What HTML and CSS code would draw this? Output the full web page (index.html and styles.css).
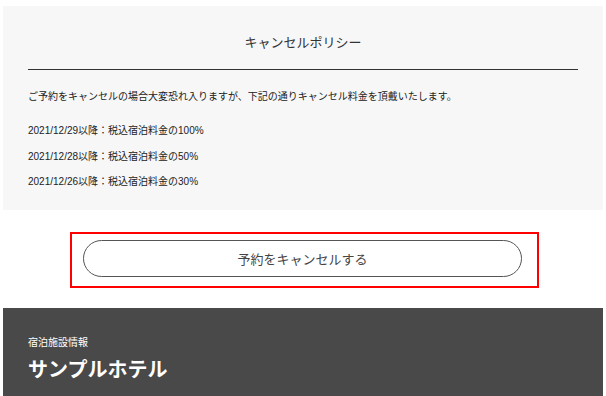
FILE: index.html
```html
<!DOCTYPE html>
<html lang="ja">
<head>
    <meta charset="UTF-8">
    <meta name="viewport" content="width=device-width, initial-scale=1.0">
    <title>キャンセルポリシー</title>
    <link rel="stylesheet" href="styles.css">
</head>
<body>
    <div class="page">
        <section class="policy">
            <h2>キャンセルポリシー</h2>
            <p class="policy-lead">ご予約をキャンセルの場合大変恐れ入りますが、下記の通りキャンセル料金を頂戴いたします。</p>
            <ul class="policy-list">
                <li>2021/12/29以降：税込宿泊料金の100%</li>
                <li>2021/12/28以降：税込宿泊料金の50%</li>
                <li>2021/12/26以降：税込宿泊料金の30%</li>
            </ul>
        </section>

        <div class="cancel-area">
            <button type="button" class="cancel-button">予約をキャンセルする</button>
        </div>

        <footer class="hotel-info">
            <p class="hotel-label">宿泊施設情報</p>
            <p class="hotel-name">サンプルホテル</p>
        </footer>
    </div>
</body>
</html>
```

FILE: styles.css
```css
body {
    margin: 0;
    padding: 0;
    background-color: #fff;
    color: #222;
    font-family: 'Liberation Sans', 'Noto Sans CJK JP', sans-serif;
}

.page {
    padding: 6px 3px 0;
}

.policy {
    background-color: #f7f7f7;
    padding: 0 25px 20px;
}

.policy h2 {
    margin: 0;
    padding: 27px 0 16px;
    font-size: 13px;
    line-height: 20px;
    font-weight: 400;
    text-align: center;
    color: #333;
    border-bottom: 1px solid #333;
}

.policy-lead {
    margin: 19px 0 0;
    font-size: 10px;
    line-height: 16px;
}

.policy-list {
    list-style: none;
    margin: 18px 0 0;
    padding: 0;
    display: flex;
    flex-direction: column;
    gap: 9.5px;
}

.policy-list li {
    font-size: 10px;
    line-height: 16px;
}

.cancel-area {
    width: 469px;
    box-sizing: border-box;
    margin: 22px 0 0 67px;
    padding: 6px 15px 9px 11px;
    border: 2px solid #f00;
}

.cancel-button {
    display: block;
    width: 100%;
    height: 37px;
    background: #fff;
    border: 1px solid #555;
    border-radius: 19px;
    font-family: inherit;
    font-size: 13px;
    color: #444;
    cursor: pointer;
}

.hotel-info {
    margin-top: 20px;
    background-color: #494949;
    color: #fff;
    padding: 28px 25px 30px;
}

.hotel-label {
    margin: 0;
    font-size: 10px;
    line-height: 14px;
}

.hotel-name {
    margin: 6px 0 0;
    font-size: 20px;
    line-height: 28px;
    font-weight: 700;
}
```
